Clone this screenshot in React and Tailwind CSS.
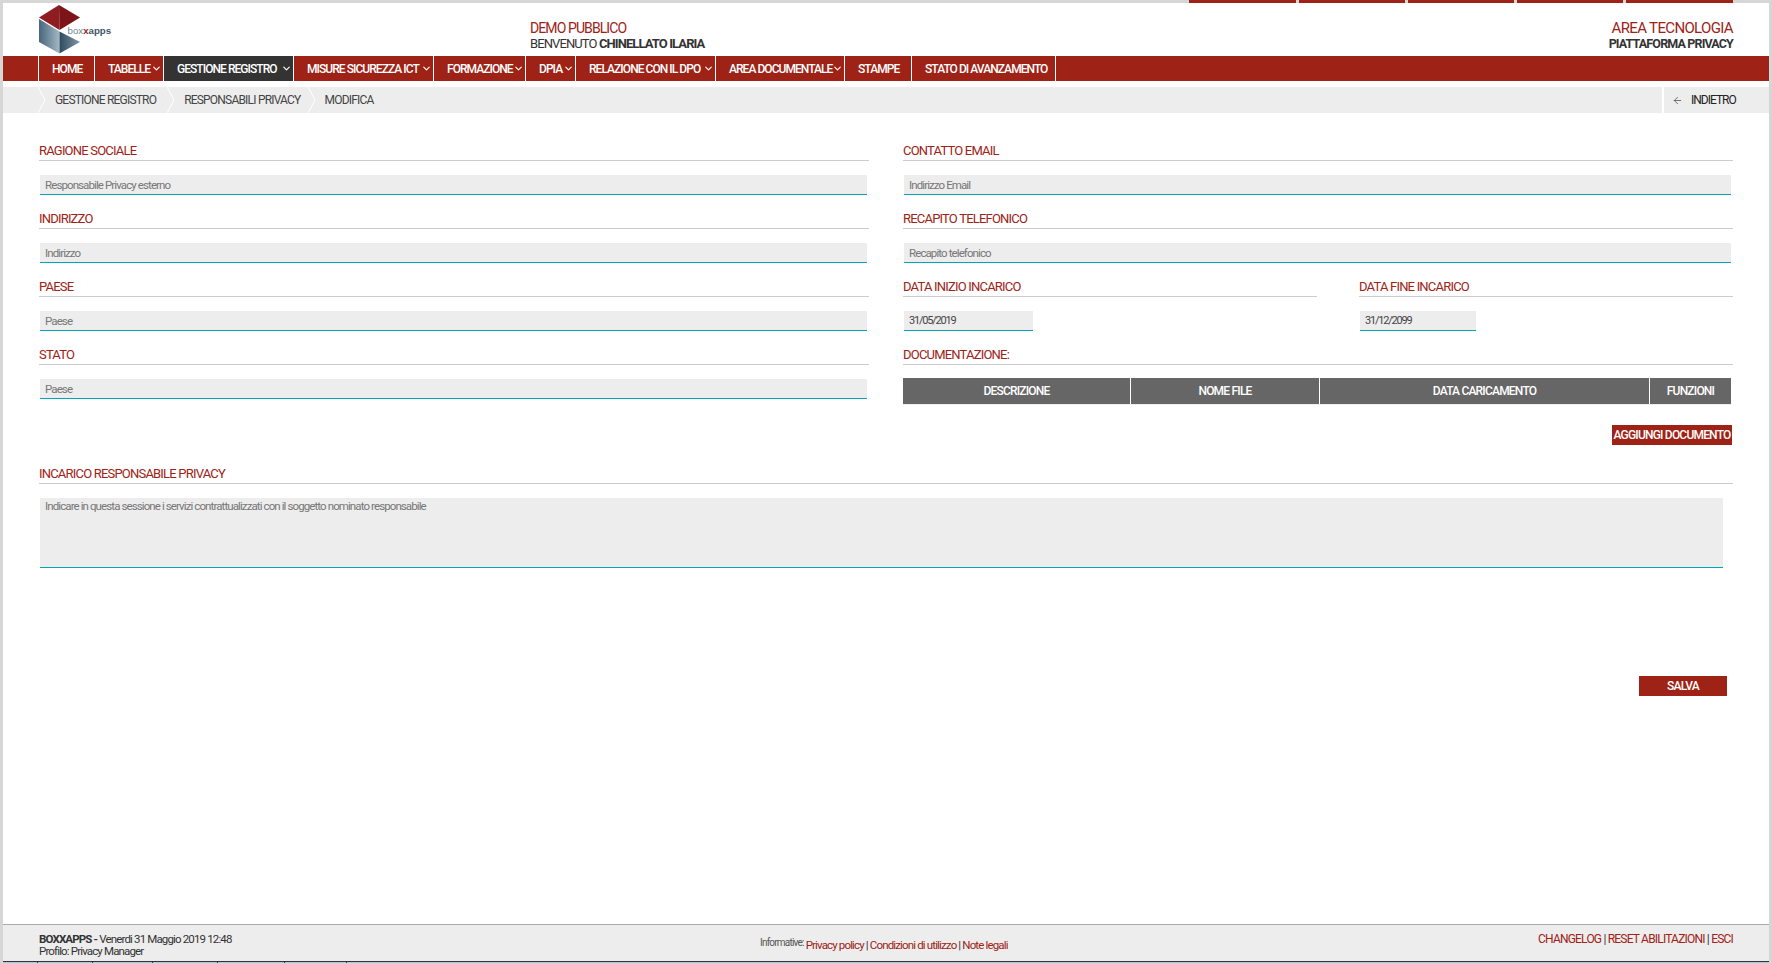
import React from 'react'
import { ArrowLeft, ChevronDown } from 'lucide-react'

const menu = [
    { label: 'HOME', w: 'w-[56px]' },
    { label: 'TABELLE', w: 'w-[69px]', arrow: true },
    { label: 'GESTIONE REGISTRO', w: 'w-[130px]', arrow: true, active: true },
    { label: 'MISURE SICUREZZA ICT', w: 'w-[140px]', arrow: true },
    { label: 'FORMAZIONE', w: 'w-[92px]', arrow: true },
    { label: 'DPIA', w: 'w-[50px]', arrow: true },
    { label: 'RELAZIONE CON IL DPO', w: 'w-[140px]', arrow: true },
    { label: 'AREA DOCUMENTALE', w: 'w-[129px]', arrow: true },
    { label: 'STAMPE', w: 'w-[67px]' },
    { label: 'STATO DI AVANZAMENTO', w: 'w-[144px]' },
]

const Logo = () => (
    <svg viewBox="34 3 84 53" className="w-[84px] h-[53px] shrink-0">
        <defs>
            <linearGradient id="faceLeft" x1="0" x2="1" y1="0" y2="0">
                <stop offset="0" stopColor="#47667c" />
                <stop offset="1" stopColor="#a3b8c4" />
            </linearGradient>
            <linearGradient id="faceRight" x1="0" x2="1" y1="0" y2="0">
                <stop offset="0" stopColor="#2f4a5e" />
                <stop offset="1" stopColor="#7f99a9" />
            </linearGradient>
        </defs>
        <polygon points="39,17.5 59,5 59.5,30" fill="#8f1c20" />
        <polygon points="59,5 80,17.5 59.5,30" fill="#7c1518" />
        <polygon points="39,19 59.5,31.5 59.5,53.5 39,42" fill="url(#faceLeft)" />
        <polygon points="59.5,31.5 80,42 59.5,53.5" fill="url(#faceRight)" />
        <text x="67.5" y="33.5" fontSize="9.7" fontFamily="Liberation Sans, sans-serif" letterSpacing="0" fill="#6f8494">
            box<tspan fill="#9e2216" fontWeight="700">x</tspan><tspan fill="#3c5568" fontWeight="700">apps</tspan>
        </text>
    </svg>
)

const Crumb = ({ className }) => (
    <svg viewBox="0 0 8 26" className={`w-[8px] h-[26px] shrink-0 ${className}`}>
        <polyline points="0,0 7,13 0,26" fill="none" stroke="#ffffff" strokeWidth="1" />
    </svg>
)

const Label = ({ text, className = '' }) => (
    <div className={`h-[20px] border-b border-[#cccccc] text-[13px] leading-[19px] tracking-[-0.8px] text-[#9e2216] ${className}`}>{text}</div>
)

const TextInput = ({ placeholder, value, className = 'w-[827px] text-[11.5px] tracking-[-0.9px]' }) => (
    <input
        type="text"
        readOnly
        placeholder={placeholder}
        value={value}
        className={`block h-[20px] mt-[14px] ml-[1px] pl-[5px] bg-[#ededed] border-b border-[#00a5b8] text-[#444444] placeholder:text-[#777777] outline-none ${className}`}
    />
)

const Field = ({ label, placeholder }) => (
    <div className="mb-[14px]">
        <Label text={label} />
        <TextInput placeholder={placeholder} />
    </div>
)

export default function App() {
    return (
        <div className="h-screen flex flex-col bg-white border-x-[3px] border-[#d6d6d6] [font-family:Roboto,'Liberation_Sans',sans-serif] text-[12px] tracking-[-0.8px] text-[#333333]">
            {/* top tabs */}
            <div className="h-[3px] shrink-0 flex justify-end gap-[3px] bg-[#d6d6d6] pr-[36px]">
                <div className="w-[107px] bg-[#9e2216]"></div>
                <div className="w-[106px] bg-[#9e2216]"></div>
                <div className="w-[106px] bg-[#9e2216]"></div>
                <div className="w-[106px] bg-[#9e2216]"></div>
                <div className="w-[107px] bg-[#9e2216]"></div>
            </div>

            {/* Header */}
            <div className="h-[53px] shrink-0 flex pl-[31px] pr-[36px]">
                <Logo />
                <div className="ml-[412px] pt-[18px] leading-[15px]">
                    <div className="text-[14px] tracking-[-0.9px] text-[#9e2216]">DEMO PUBBLICO</div>
                    <div className="text-[13px] tracking-[-0.9px]">BENVENUTO <span className="font-bold">CHINELLATO ILARIA</span></div>
                </div>
                <div className="ml-auto pt-[18px] leading-[15px] text-right">
                    <div className="text-[15px] tracking-[-0.65px] text-[#9e2216]">AREA TECNOLOGIA</div>
                    <div className="text-[12.5px] tracking-[-0.85px] font-bold">PIATTAFORMA PRIVACY</div>
                </div>
            </div>

            {/* Menu */}
            <div className="h-[25px] shrink-0 flex pl-[35px] bg-[#9e2216] text-white text-[12px] tracking-[-0.95px] font-medium">
                <div className="w-[1px] bg-white"></div>
                {menu.map((item) => (
                    <div
                        key={item.label}
                        className={`${item.w} flex items-center pl-[13px] border-r border-white whitespace-nowrap ${item.active ? 'bg-[#333333]' : ''}`}
                    >
                        {item.label}
                        {item.arrow && <ChevronDown className="w-[11px] h-[11px] ml-auto mr-[1px] shrink-0" strokeWidth={2.5} />}
                    </div>
                ))}
            </div>

            {/* Breadcrumb */}
            <div className="h-[26px] shrink-0 mt-[6px] flex items-center pl-[35px] bg-[#ededed] text-[#444444]">
                <Crumb />
                <span className="ml-[9px]">GESTIONE REGISTRO</span>
                <Crumb className="ml-[11px]" />
                <span className="ml-[9px]">RESPONSABILI PRIVACY</span>
                <Crumb className="ml-[7px]" />
                <span className="ml-[9px]">MODIFICA</span>
                <div className="ml-auto h-full w-[107px] flex items-center border-l-2 border-white pl-[8px] tracking-[-1px] text-[#222222]">
                    <ArrowLeft className="w-[11px] h-[11px] text-[#666666]" />
                    <span className="ml-[8px]">INDIETRO</span>
                </div>
            </div>

            {/* Form */}
            <div className="flex-1 min-h-0 pt-[28px] pl-[36px]">
                <div className="flex gap-[34px]">
                    <div className="w-[830px]">
                        <Field label="RAGIONE SOCIALE" placeholder="Responsabile Privacy esterno" />
                        <Field label="INDIRIZZO" placeholder="Indirizzo" />
                        <Field label="PAESE" placeholder="Paese" />
                        <Field label="STATO" placeholder="Paese" />
                    </div>
                    <div className="w-[830px]">
                        <Field label="CONTATTO EMAIL" placeholder="Indirizzo Email" />
                        <Field label="RECAPITO TELEFONICO" placeholder="Recapito telefonico" />
                        <div className="flex gap-[42px] mb-[14px]">
                            <div className="w-[414px]">
                                <Label text="DATA INIZIO INCARICO" />
                                <TextInput value="31/05/2019" className="w-[129px] text-[11px] tracking-[-1.2px]" />
                            </div>
                            <div className="w-[374px]">
                                <Label text="DATA FINE INCARICO" />
                                <TextInput value="31/12/2099" className="w-[116px] text-[11px] tracking-[-1.2px]" />
                            </div>
                        </div>
                        <Label text="DOCUMENTAZIONE:" />
                        <div className="mt-[13px] w-[828px] h-[27px] grid grid-cols-[228px_189px_330px_81px] bg-[#666666] border-b border-[#eeeeee] text-white font-medium text-center leading-[26px]">
                            <div className="border-r border-white">DESCRIZIONE</div>
                            <div className="border-r border-white">NOME FILE</div>
                            <div className="border-r border-white">DATA CARICAMENTO</div>
                            <div>FUNZIONI</div>
                        </div>
                        <div className="mt-[20px] flex justify-end pr-[1px]">
                            <button className="w-[120px] h-[20px] bg-[#9e2216] text-white font-medium whitespace-nowrap">AGGIUNGI DOCUMENTO</button>
                        </div>
                    </div>
                </div>

                <div className="w-[1694px] mt-[19px]">
                    <Label text="INCARICO RESPONSABILE PRIVACY" />
                    <textarea
                        readOnly
                        placeholder="Indicare in questa sessione i servizi contrattualizzati con il soggetto nominato responsabile"
                        className="block w-[1683px] h-[70px] mt-[14px] ml-[1px] px-[5px] bg-[#ededed] border-b border-[#00a5b8] text-[11.5px] tracking-[-0.9px] placeholder:text-[#777777] outline-none resize-none"
                    ></textarea>
                    <div className="mt-[108px] flex justify-end pr-[6px]">
                        <button className="w-[88px] h-[20px] bg-[#9e2216] text-white font-medium">SALVA</button>
                    </div>
                </div>
            </div>

            {/* Footer */}
            <div className="h-[37px] shrink-0 flex pl-[36px] pr-[36px] pt-[9px] bg-[#ededed] border-t border-[#aaaaaa] leading-[11.5px]">
                <div className="w-[721px] text-[11.5px] tracking-[-0.85px]">
                    <div><span className="font-bold">BOXXAPPS -</span> Venerdi 31 Maggio 2019 12:48</div>
                    <div>Profilo: Privacy Manager</div>
                </div>
                <div className="flex items-start">
                    <span className="text-[10px] mt-[3px] mr-[2px] text-[#555555]">Informative:</span>
                    <span className="mt-[6px] text-[11.5px] tracking-[-0.85px]">
                        <span className="text-[#9e2216]">Privacy policy</span> | <span className="text-[#9e2216]">Condizioni di utilizzo</span> | <span className="text-[#9e2216]">Note legali</span>
                    </span>
                </div>
                <div className="ml-auto">
                    <span className="text-[#9e2216]">CHANGELOG</span> | <span className="text-[#9e2216]">RESET ABILITAZIONI</span> | <span className="text-[#9e2216]">ESCI</span>
                </div>
            </div>

            {/* strip of the desktop bar under the page */}
            <div className="h-[2px] shrink-0 border-t border-[#333333] bg-[#8fd6ec] flex">
                <div className="w-[35px] border-r border-[#333333]"></div>
                <div className="w-[55px] border-r border-[#333333]"></div>
                <div className="w-[60px] border-r border-[#333333]"></div>
                <div className="w-[65px] border-r border-[#333333]"></div>
                <div className="w-[67px] border-r border-[#333333]"></div>
                <div className="w-[62px] border-r border-[#333333]"></div>
            </div>
        </div>
    )
}
